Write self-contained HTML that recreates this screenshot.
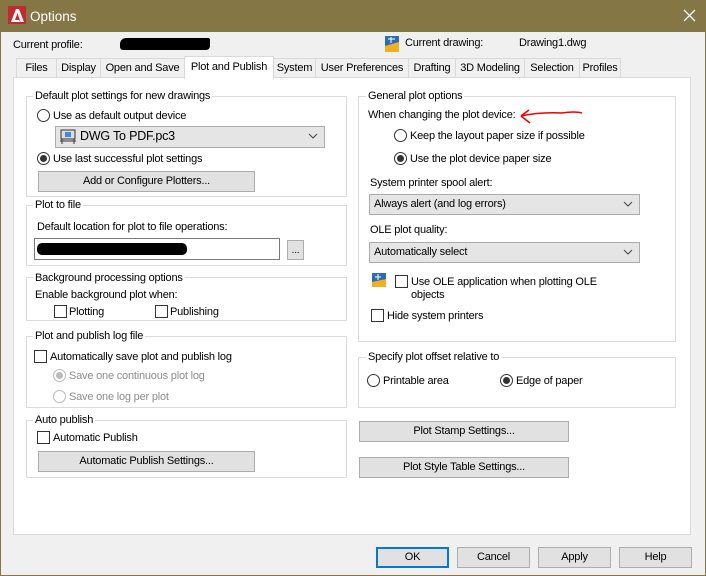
<!DOCTYPE html>
<html><head><meta charset="utf-8"><style>
*{box-sizing:border-box;margin:0;padding:0}
body{width:706px;height:576px;position:relative;background:#f0f0f0;font-family:"Liberation Sans",sans-serif;font-size:11px;letter-spacing:-0.2px;color:#000;overflow:hidden}
.a{position:absolute}
.t{position:absolute;line-height:14px;white-space:nowrap}
.g{position:absolute;border:1px solid #dcdcdc}
.gl{position:absolute;background:#fff;padding:0 2px;line-height:14px;white-space:nowrap}
.btn{position:absolute;background:#e1e1e1;border:1px solid #adadad;text-align:center;line-height:18px;white-space:nowrap}
.cb{position:absolute;width:13px;height:13px;border:1px solid #333;background:#fff}
.rd{position:absolute;width:13px;height:13px;border:1px solid #333;border-radius:50%;background:#fff}
.rd.on::after{content:"";position:absolute;left:2px;top:2px;width:7px;height:7px;border-radius:50%;background:#333}
.rd.dis{border-color:#bcbcbc}
.rd.dis.on::after{background:#bcbcbc}
.combo{position:absolute;background:#e5e5e5;border:1px solid #acacac;line-height:18px;padding-left:4px;white-space:nowrap}
.chev{position:absolute;right:6px;top:6px}
.grey{color:#8d8d8d}
.tab{position:absolute;top:58px;height:19px;border:1px solid #d9d9d9;border-bottom:none;background:#f0f0f0;text-align:center;line-height:18px;white-space:nowrap}
</style></head><body>
<div class="a" style="left:0;top:0;width:706px;height:576px;border:1px solid #857645"></div>
<div class="a" style="left:0;top:0;width:706px;height:32px;background:#857645"></div>
<svg class="a" style="left:8px;top:6px" width="18" height="18" viewBox="0 0 18 18"><rect width="18" height="18" fill="#c8282d"/><path d="M3 16 L8 3 L11 3 L16 16 L12.5 16 L9.5 7 L7 14 L11 14 L12 16 Z" fill="#fff"/></svg>
<div class="t" style="left:30px;top:8px;font-size:13.5px;line-height:17px;color:#fff;letter-spacing:0">Options</div>
<svg class="a" style="left:683px;top:9px" width="13" height="13"><path d="M1 1L12 12M12 1L1 12" stroke="#fff" stroke-width="1.3"/></svg>

<div class="t" style="left:13px;top:38px">Current profile:</div>
<div class="a" style="left:120px;top:38px;width:90px;height:12px;background:#000;border-radius:6px 2px 4px 3px"></div>
<svg class="a" style="left:385px;top:36px" width="14" height="16"><rect width="14" height="16" fill="#2d6cb5"/><path d="M0 10 L14 6 L14 16 L0 16Z" fill="#f2b01e"/><path d="M3 3H10M6 1V7" stroke="#fff"/></svg>
<div class="t" style="left:405px;top:36px">Current drawing:</div>
<div class="t" style="left:519px;top:36px">Drawing1.dwg</div>

<div class="tab" style="left:16px;width:41px">Files</div>
<div class="tab" style="left:56px;width:45px">Display</div>
<div class="tab" style="left:100px;width:85px">Open and Save</div>
<div class="tab" style="left:273px;width:43px">System</div>
<div class="tab" style="left:315px;width:94px">User Preferences</div>
<div class="tab" style="left:408px;width:48px">Drafting</div>
<div class="tab" style="left:455px;width:70px">3D Modeling</div>
<div class="tab" style="left:524px;width:56px">Selection</div>
<div class="tab" style="left:579px;width:42px">Profiles</div>
<div class="a" style="left:13px;top:77px;width:678px;height:458px;background:#fff;border:1px solid #d9d9d9"></div>
<div class="a" style="left:184px;top:56px;width:90px;height:23px;background:#fff;border:1px solid #d9d9d9;border-bottom:none;text-align:center;line-height:20px;white-space:nowrap">Plot and Publish</div>

<div class="g" style="left:26px;top:96px;width:321px;height:101px"></div>
<div class="gl" style="left:33px;top:89px">Default plot settings for new drawings</div>
<div class="rd" style="left:37px;top:109px"></div><div class="t" style="left:53px;top:109px">Use as default output device</div>
<div class="combo" style="left:55px;top:126px;width:270px;height:22px"><svg class="a" style="left:3px;top:2px" width="18" height="16"><rect x="2" y="1" width="14" height="9" fill="#ddd" stroke="#333"/><rect x="6" y="3" width="6" height="5" fill="#3a8de0"/><path d="M3 10V15M15 10V15M1 12H17" stroke="#333"/></svg><span style="margin-left:20px;font-size:12.5px">DWG To PDF.pc3</span><svg class="chev" width="10" height="6"><path d="M1 1L5 5L9 1" stroke="#444" fill="none"/></svg></div>
<div class="rd on" style="left:37px;top:152px"></div><div class="t" style="left:53px;top:152px">Use last successful plot settings</div>
<div class="btn" style="left:38px;top:171px;width:217px;height:21px">Add or Configure Plotters...</div>

<div class="g" style="left:26px;top:205px;width:321px;height:61px"></div>
<div class="gl" style="left:33px;top:198px">Plot to file</div>
<div class="t" style="left:37px;top:220px">Default location for plot to file operations:</div>
<div class="a" style="left:34px;top:238px;width:246px;height:22px;border:1px solid #7a7a7a;background:#fff"></div>
<div class="a" style="left:37px;top:243px;width:150px;height:12px;background:#000;border-radius:5px"></div>
<div class="btn" style="left:287px;top:240px;width:17px;height:20px;line-height:20px;font-size:10px">...</div>

<div class="g" style="left:26px;top:277px;width:321px;height:44px"></div>
<div class="gl" style="left:33px;top:271px">Background processing options</div>
<div class="t" style="left:35px;top:288px">Enable background plot when:</div>
<div class="cb" style="left:54px;top:305px"></div><div class="t" style="left:69px;top:305px">Plotting</div>
<div class="cb" style="left:155px;top:305px"></div><div class="t" style="left:170px;top:305px">Publishing</div>

<div class="g" style="left:26px;top:336px;width:321px;height:72px"></div>
<div class="gl" style="left:33px;top:329px">Plot and publish log file</div>
<div class="cb" style="left:34px;top:350px"></div><div class="t" style="left:50px;top:350px">Automatically save plot and publish log</div>
<div class="rd dis on" style="left:53px;top:369px"></div><div class="t grey" style="left:69px;top:369px">Save one continuous plot log</div>
<div class="rd dis" style="left:53px;top:390px"></div><div class="t grey" style="left:69px;top:390px">Save one log per plot</div>

<div class="g" style="left:26px;top:420px;width:321px;height:58px"></div>
<div class="gl" style="left:33px;top:413px">Auto publish</div>
<div class="cb" style="left:37px;top:431px"></div><div class="t" style="left:53px;top:431px">Automatic Publish</div>
<div class="btn" style="left:38px;top:451px;width:217px;height:21px">Automatic Publish Settings...</div>

<div class="g" style="left:358px;top:96px;width:318px;height:246px"></div>
<div class="gl" style="left:366px;top:89px">General plot options</div>
<div class="t" style="left:368px;top:108px">When changing the plot device:</div>
<svg class="a" style="left:520px;top:106px" width="64" height="20"><path d="M1 10 Q20 6 42 7 Q55 5 62 7 M1 10 L9 4 M1 10 L10 17" stroke="#e00" stroke-width="1.5" fill="none"/></svg>
<div class="rd" style="left:394px;top:129px"></div><div class="t" style="left:410px;top:129px">Keep the layout paper size if possible</div>
<div class="rd on" style="left:394px;top:152px"></div><div class="t" style="left:410px;top:152px">Use the plot device paper size</div>
<div class="t" style="left:370px;top:176px">System printer spool alert:</div>
<div class="combo" style="left:369px;top:194px;width:271px;height:21px">Always alert (and log errors)<svg class="chev" width="10" height="6"><path d="M1 1L5 5L9 1" stroke="#444" fill="none"/></svg></div>
<div class="t" style="left:370px;top:223px">OLE plot quality:</div>
<div class="combo" style="left:369px;top:242px;width:271px;height:21px">Automatically select<svg class="chev" width="10" height="6"><path d="M1 1L5 5L9 1" stroke="#444" fill="none"/></svg></div>
<svg class="a" style="left:372px;top:273px" width="14" height="14"><rect width="14" height="14" fill="#2d6cb5"/><path d="M0 9 L14 6 L14 14 L0 14Z" fill="#f2b01e"/><path d="M3 4H9M6 1V7" stroke="#fff"/></svg>
<div class="cb" style="left:395px;top:275px"></div><div class="t" style="left:411px;top:275px">Use OLE application when plotting OLE</div>
<div class="t" style="left:411px;top:288px">objects</div>
<div class="cb" style="left:371px;top:309px"></div><div class="t" style="left:387px;top:309px">Hide system printers</div>

<div class="g" style="left:358px;top:357px;width:318px;height:51px"></div>
<div class="gl" style="left:366px;top:350px">Specify plot offset relative to</div>
<div class="rd" style="left:367px;top:374px"></div><div class="t" style="left:383px;top:374px">Printable area</div>
<div class="rd on" style="left:500px;top:374px"></div><div class="t" style="left:516px;top:374px">Edge of paper</div>

<div class="btn" style="left:359px;top:421px;width:210px;height:21px">Plot Stamp Settings...</div>
<div class="btn" style="left:359px;top:457px;width:210px;height:21px">Plot Style Table Settings...</div>

<div class="btn" style="left:376px;top:547px;width:73px;height:21px;border:2px solid #0078d7;line-height:17px">OK</div>
<div class="btn" style="left:457px;top:547px;width:73px;height:21px">Cancel</div>
<div class="btn" style="left:538px;top:547px;width:73px;height:21px">Apply</div>
<div class="btn" style="left:619px;top:547px;width:73px;height:21px">Help</div>
</body></html>
